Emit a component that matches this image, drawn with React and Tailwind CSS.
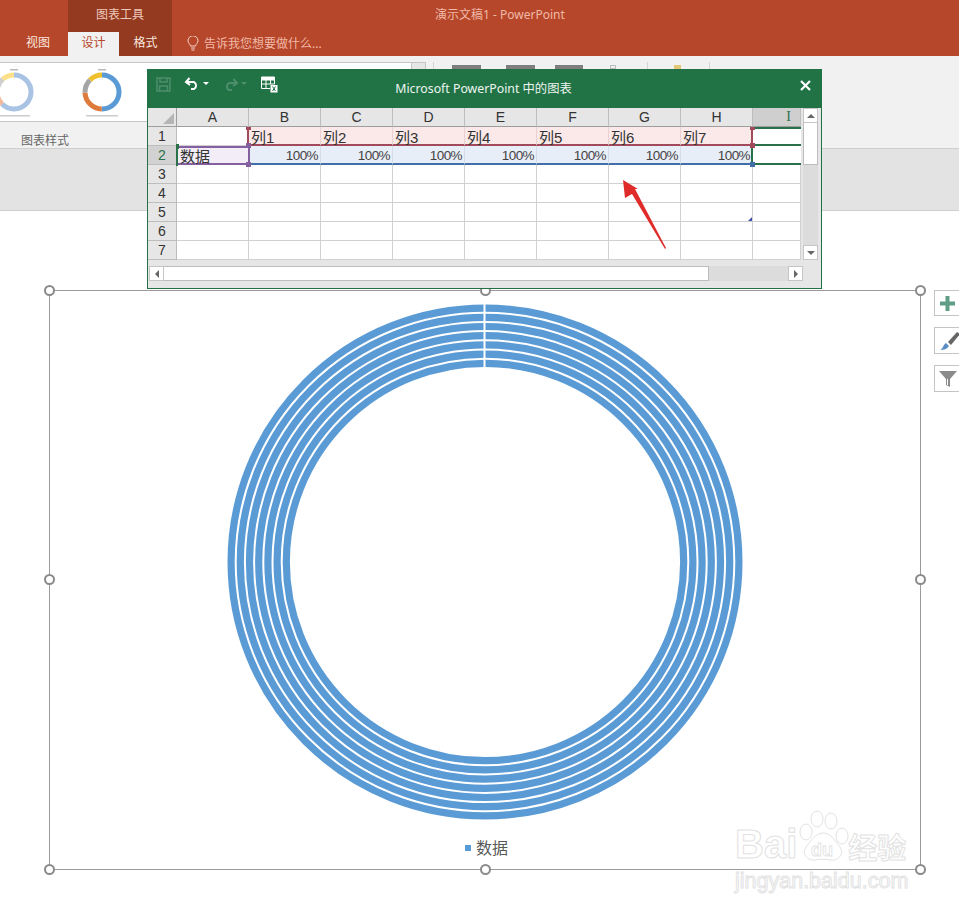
import React from "react";

const cjk = { fontFamily: '"Noto Sans", "Noto Sans CJK SC", sans-serif' };
const cell = { fontFamily: '"Liberation Sans", "Noto Sans CJK SC", sans-serif' };

const columns = ["A", "B", "C", "D", "E", "F", "G", "H", "I"];
const seriesNames = ["列1", "列2", "列3", "列4", "列5", "列6", "列7"];
const rings = [0, 1, 2, 3, 4, 5, 6];

function Handle({ className }) {
  return (
    <span
      className={`absolute h-[11px] w-[11px] rounded-full border-2 border-[#8a8a8a] bg-white ${className}`}
    />
  );
}

function Thumb({ pale }) {
  const c = 2 * Math.PI * 17;
  const parts = pale
    ? [
        ["#a9c3e4", 0.62],
        ["#f4b99c", 0.14],
        ["#cfcfcf", 0.12],
        ["#ffe08a", 0.12],
      ]
    : [
        ["#5b9bd5", 0.5],
        ["#dd7a3c", 0.24],
        ["#a5a5a5", 0.13],
        ["#f0c02c", 0.13],
      ];
  let offset = 0;
  return (
    <svg className="mt-[4px]" width="44" height="52" viewBox="0 0 44 52">
      <g transform="rotate(-90 22 24)" fill="none" strokeWidth="5">
        {parts.map(([color, share]) => {
          const el = (
            <circle
              key={color}
              cx="22"
              cy="24"
              r="17"
              stroke={color}
              strokeDasharray={`${share * c} ${c}`}
              strokeDashoffset={-offset * c}
            />
          );
          offset += share;
          return el;
        })}
      </g>
      <rect x="18" y="1" width="8" height="1.5" fill="#bbb" />
      <rect x="6" y="47" width="32" height="1.5" fill="#ccc" />
    </svg>
  );
}

function TitleBar() {
  return (
    <div className="bg-[#b7472a] text-white" style={cjk}>
      <div className="flex h-8">
        <div className="w-[68px]" />
        <div className="flex w-[104px] items-center justify-center bg-[#933a20] pb-[2px] text-xs text-[#f0c8bb]">
          图表工具
        </div>
        <div className="pl-[263px] pt-[7px] text-xs leading-4 text-[#f0b9a8]">
          演示文稿1 - PowerPoint
        </div>
      </div>
      <div className="flex h-6 text-xs">
        <div className="w-[68px] pl-[26px] pt-[3px] text-[#fbe6df]">视图</div>
        <div className="w-[51px] bg-[#f1f1f1] pt-[3px] text-center text-[#b7472a]">设计</div>
        <div className="w-[53px] bg-[#933a20] pt-[3px] text-center text-[#fbe6df]">格式</div>
        <div className="flex items-center gap-[5px] pb-[1px] pl-[15px] text-xs text-[#f0b9a8]">
          <svg width="12" height="15" viewBox="0 0 12 15" fill="none" stroke="#f5d6cb" strokeWidth="1">
            <path d="M3.5 10C3.3 8 1 7.2 1 4.8a5 5 0 0 1 10 0C11 7.200 8.700 8 8.500 10Z" />
            <path d="M4 12h4M4.500 14h3" />
          </svg>
          告诉我您想要做什么...
        </div>
      </div>
    </div>
  );
}

function Ribbon() {
  return (
    <div className="h-[155px] border-b border-[#d0d0d0] bg-[#e3e3e3]" style={cjk}>
      <div className="h-[93px] border-b border-[#cfcfcf] bg-[#f1f1f1]">
        <div className="flex items-start pt-[6px]">
          <div className="flex h-[60px] w-[412px] items-center gap-[44px] overflow-hidden border border-l-0 border-[#c6c6c6] bg-white pl-0">
            <div className="ml-[-8px]">
              <Thumb pale />
            </div>
            <Thumb />
          </div>
          <div className="h-[60px] w-[14px] border-y border-r border-[#c6c6c6] bg-[#e6e6e6]" />
          <div className="ml-[7px] h-[62px] w-px bg-[#d4d4d4]" />
          <div className="ml-[18px] mt-[3px] h-[4px] w-[29px] bg-[#7e7e7e]" />
          <div className="ml-[25px] mt-[3px] h-[4px] w-[29px] bg-[#7e7e7e]" />
          <div className="ml-[20px] mt-[3px] h-[4px] w-[28px] bg-[#7e7e7e]" />
          <div className="ml-[27px] mt-[3px] h-[4px] w-[6px] border border-[#bdbdbd]" />
          <div className="ml-[31px] h-[56px] w-px bg-[#d4d4d4]" />
          <div className="ml-[26px] mt-[3px] h-[4px] w-[7px] bg-[#e3c878]" />
          <div className="ml-[28px] h-[56px] w-px bg-[#d4d4d4]" />
        </div>
        <div className="pl-[21px] pt-[7px] text-xs leading-5 text-[#666]">图表样式</div>
      </div>
    </div>
  );
}

function ColumnHeader({ name }) {
  const active = name === "I";
  return (
    <div
      className={`flex items-center justify-center border-b border-r border-b-[#9e9e9e] border-r-[#bdbdbd] text-sm ${
        active ? "bg-[#cfcfcf] pl-[24px] text-[#2b6f4a]" : "bg-[#e6e6e6] text-[#333]"
      }`}
      style={active ? { fontFamily: '"Liberation Serif", serif' } : undefined}
    >
      {name}
    </div>
  );
}

function ExcelGrid() {
  return (
    <div
      className="relative grid grid-cols-[29px_repeat(8,72px)_48px] grid-rows-[repeat(8,19px)] text-sm text-[#333]"
      style={cell}
    >
      <div className="flex items-end justify-end border-b border-r border-b-[#9e9e9e] border-r-[#9e9e9e] bg-[#e6e6e6] p-[2px]">
        <div className="h-0 w-0 border-b-[11px] border-l-[11px] border-b-[#b5b5b5] border-l-transparent" />
      </div>
      {columns.map((c) => (
        <ColumnHeader key={c} name={c} />
      ))}

      {/* row 1 */}
      <div className="flex items-center justify-center border-b border-r border-[#bdbdbd] bg-[#e6e6e6]">1</div>
      <div className="border-b border-r border-[#d0d0d0] bg-white" />
      {seriesNames.map((n) => (
        <div key={n} className="border-b-2 border-r border-b-[#a04a5c] border-r-[#e6d0d0] bg-[#fbe8e8] pl-[2px] text-[15px] leading-[21px]">
          {n}
        </div>
      ))}
      <div className="border-b-2 border-t-2 border-[#2a7048] bg-white" />

      {/* row 2 */}
      <div className="flex items-center justify-center border-b border-r border-[#bdbdbd] bg-[#d2d2d2] text-[#2b6f4a]">2</div>
      <div className="border-y-2 border-[#8560a0] bg-[#f2edf7] pl-[3px] text-[15px] leading-[17px]">数据</div>
      {seriesNames.map((n) => (
        <div key={n} className="border-b-2 border-r border-b-[#3f6ea8] border-r-[#d5dde8] bg-[#e8eef8] pr-[2px] text-right text-[13.5px] leading-[19px] tracking-[-0.6px] text-[#444]">
          100%
        </div>
      ))}
      <div className="border-b-2 border-[#2a7048] bg-white" />

      {/* rows 3-7 */}
      {[3, 4, 5, 6, 7].map((row) => (
        <React.Fragment key={row}>
          <div className="flex items-center justify-center border-b border-r border-[#bdbdbd] bg-[#e6e6e6]">{row}</div>
          {columns.map((c) => (
            <div key={c} className="border-b border-r border-[#d0d0d0] bg-white" />
          ))}
        </React.Fragment>
      ))}

      {/* range handles */}
      <span className="absolute left-[98px] top-[35px] h-[5px] w-[5px] bg-[#8560a0]" />
      <span className="absolute left-[98px] top-[54px] h-[5px] w-[5px] bg-[#8560a0]" />
      <span className="absolute left-[28px] top-[36px] h-[5px] w-[3px] bg-[#2a7048]" />
      <span className="absolute left-[28px] top-[40px] h-[18px] w-[2px] bg-[#2a7048]" />
      <span className="absolute left-[100px] top-[40px] h-[15px] w-[2px] bg-[#8560a0]" />
      <span className="absolute left-[98px] top-[19px] h-[3px] w-[5px] bg-[#a04a5c]" />
      <span className="absolute left-[99px] top-[22px] h-[13px] w-[2px] bg-[#a04a5c]" />
      <span className="absolute left-[602px] top-[19px] h-[3px] w-[5px] bg-[#a04a5c]" />
      <span className="absolute left-[603px] top-[22px] h-[13px] w-[2px] bg-[#a04a5c]" />
      <span className="absolute left-[602px] top-[35px] h-[5px] w-[5px] bg-[#a04a5c]" />
      <span className="absolute left-[603px] top-[40px] h-[15px] w-[2px] bg-[#2a7048]" />
      <span className="absolute left-[602px] top-[54px] h-[5px] w-[5px] bg-[#3f6ea8]" />
      <span className="absolute left-[600px] top-[109px] h-0 w-0 border-b-[4px] border-l-[4px] border-b-[#3f4fa8] border-l-transparent" />

      {/* annotation arrow */}
      <svg className="absolute left-[460px] top-[60px]" width="70" height="90" viewBox="0 0 70 90">
        <polygon points="15,12 17,30 24,26 57,81 58,80 27,21 30,21" fill="#e02b2b" />
      </svg>
    </div>
  );
}

function ExcelWindow() {
  return (
    <div className="absolute left-[147px] top-[69px] z-10 w-[675px] border border-[#217346] bg-[#e6e6e6]">
      <div className="relative flex h-[38px] items-start bg-[#217346] text-white">
        <svg className="ml-[8px] mt-[7px]" width="15" height="15" viewBox="0 0 15 15" fill="none" stroke="#4d8f6c" strokeWidth="1.500">
          <path d="M1 1h13v13H1zM4 1v4h7V1M3.500 14V9h8v5" />
        </svg>
        <svg className="ml-[13px] mt-[6px]" width="17" height="15" viewBox="0 0 17 15" fill="none" stroke="#fff" strokeWidth="2">
          <path d="M5.500 2 2 6l4 3M2 6h8a4 4 0 0 1 0 7H7" />
        </svg>
        <span className="ml-[2px] mt-[12px] h-0 w-0 border-x-[3px] border-t-[3px] border-x-transparent border-t-white" />
        <svg className="ml-[13px] mt-[7px]" width="17" height="15" viewBox="0 0 17 15" fill="none" stroke="#4d8f6c" strokeWidth="2">
          <path d="M11.500 2 15 6l-4 3M15 6H7a4 4 0 0 0 0 7h3" />
        </svg>
        <span className="ml-[2px] mt-[12px] h-0 w-0 border-x-[3px] border-t-[3px] border-x-transparent border-t-[#4d8f6c]" />
        <svg className="ml-[14px] mt-[6px]" width="17" height="17" viewBox="0 0 17 17" fill="none" stroke="#fff" strokeWidth="1">
          <path d="M.5 1h13v3H.5z" fill="#fff" />
          <path d="M.5 4v8.500H9M.5 8h13M5 4v8.500M9.500 4v4M13.500 4v4" />
          <rect x="9.500" y="9" width="7" height="7.500" fill="#fff" stroke="none" />
          <path d="m11.500 10.500 3 4.500m0-4.500-3 4.500" stroke="#217346" />
        </svg>
        <div className="absolute inset-x-0 top-[9px] pr-[2px] text-center text-[12.3px] leading-5 text-[#eef5f0]" style={cjk}>
          Microsoft PowerPoint 中的图表
        </div>
        <svg className="absolute right-[10px] top-[10px]" width="11" height="11" viewBox="0 0 11 11" stroke="#fff" strokeWidth="2.200">
          <path d="m1 1 9 9m0-9-9 9" />
        </svg>
      </div>

      <div className="flex">
        <ExcelGrid />
        <div className="ml-[2px] flex h-[152px] w-[15px] flex-col bg-[#dcdcdc]">
          <div className="flex h-[15px] items-center justify-center border border-[#c6c6c6] bg-white">
            <span className="h-0 w-0 border-x-[4px] border-b-[4px] border-x-transparent border-b-[#666]" />
          </div>
          <div className="h-[42px] border border-t-0 border-[#bdbdbd] bg-white" />
          <div className="flex-1" />
          <div className="flex h-[15px] items-center justify-center border border-[#c6c6c6] bg-white">
            <span className="h-0 w-0 border-x-[4px] border-t-[4px] border-x-transparent border-t-[#666]" />
          </div>
        </div>
      </div>

      <div className="mb-[7px] ml-px mt-[6px] flex h-[15px] w-[654px] bg-[#dcdcdc]">
        <div className="flex w-[15px] items-center justify-center border border-[#c6c6c6] bg-white">
          <span className="h-0 w-0 border-y-[4px] border-r-[4px] border-y-transparent border-r-[#666]" />
        </div>
        <div className="w-[545px] border border-l-0 border-[#bdbdbd] bg-white" />
        <div className="flex-1" />
        <div className="flex w-[15px] items-center justify-center border border-[#c6c6c6] bg-white">
          <span className="h-0 w-0 border-y-[4px] border-l-[4px] border-y-transparent border-l-[#666]" />
        </div>
      </div>
    </div>
  );
}

function Donut() {
  return (
    <svg width="516" height="516" viewBox="0 0 516 516">
      {rings.map((i) => (
        <circle
          key={i}
          cx="258"
          cy="258"
          r={253.9 - 9.2 * i}
          fill="none"
          stroke="#5b9bd5"
          strokeWidth="7.200"
        />
      ))}
      <rect x="256.500" y="0" width="2" height="65" fill="#fff" />
    </svg>
  );
}

function SideButtons() {
  return (
    <div className="absolute left-[884px] top-[-1px] flex w-[40px] flex-col gap-[11px]">
      <div className="flex h-[26px] items-center border border-[#c4c4c4] bg-white pl-[5px]">
        <svg width="15" height="15" viewBox="0 0 15 15" fill="#5f9e85">
          <path d="M5.500 0h4v5.500H15v4H9.500V15h-4V9.500H0v-4h5.500z" />
        </svg>
      </div>
      <div className="flex h-[27px] items-center border border-[#c4c4c4] bg-white pl-[4px]">
        <svg width="22" height="22" viewBox="0 0 22 22">
          <path d="M1 20c3-1 3-5 6-7l3 3c-2 3-5 4-9 4Z" fill="#5b8ec4" />
          <path d="m9 12 9-10 3 2-9 11Z" fill="#666" />
        </svg>
      </div>
      <div className="flex h-[27px] items-center border border-[#c4c4c4] bg-white pl-[4px]">
        <svg width="18" height="18" viewBox="0 0 18 18">
          <path d="M0 1h18l-7 8v8l-4-2V9Z" fill="#8a8a8a" />
          <path d="M8.500 9v6" stroke="#fff" />
        </svg>
      </div>
    </div>
  );
}

function ChartFrame() {
  return (
    <div className="relative ml-[49px] mt-[79px] h-[580px] w-[872px] border border-[#9b9b9b]" style={cjk}>
      <div className="flex flex-col items-center pt-[13px]">
        <Donut />
        <div className="mt-[16px] flex items-center gap-[5px] pl-[3px] text-base leading-6 text-[#595959]">
          <span className="h-[6px] w-[6px] bg-[#5b9bd5]" />
          数据
        </div>
      </div>
      <Handle className="left-[-6px] top-[-6px]" />
      <Handle className="left-[430px] top-[-6px]" />
      <Handle className="left-[865px] top-[-6px]" />
      <Handle className="left-[-6px] top-[283px]" />
      <Handle className="left-[865px] top-[283px]" />
      <Handle className="left-[-6px] top-[573px]" />
      <Handle className="left-[430px] top-[573px]" />
      <Handle className="left-[865px] top-[573px]" />
      <SideButtons />
    </div>
  );
}

function Watermark() {
  const outline = "text-white [-webkit-text-stroke:1px_#e2e2e2]";
  return (
    <div className="absolute left-[735px] top-[808px] w-[175px]" style={cell}>
      <div className="flex h-[60px] items-end">
        <span className={`text-[40px] font-bold leading-[48px] ${outline}`}>Bai</span>
        <svg className="mb-[4px] ml-[1px]" width="52" height="54" viewBox="0 0 52 54" fill="#fff" stroke="#e2e2e2">
          <ellipse cx="19" cy="9" rx="6" ry="8" />
          <ellipse cx="33" cy="11" rx="6" ry="8" />
          <ellipse cx="8" cy="22" rx="6" ry="8" />
          <ellipse cx="44" cy="26" rx="6" ry="8" />
          <path d="M25 23c8 0 12 8 17 14 5 8-3 14-9 13-5-1-11-1-16 0-7 1-14-6-9-13 5-6 9-14 17-14Z" />
          <text x="13" y="46" fontSize="18" fontWeight="700" fill="#fff" stroke="#e2e2e2" strokeWidth="0.800">du</text>
        </svg>
        <span className={`ml-[-2px] text-[29px] font-bold leading-[40px] ${outline}`} style={cjk}>经验</span>
      </div>
      <div className={`text-[21.500px] leading-[26px] ${outline}`}>jingyan.baidu.com</div>
    </div>
  );
}

export default function App() {
  return (
    <div className="relative h-[912px] w-[959px] overflow-hidden bg-white">
      <TitleBar />
      <Ribbon />
      <ChartFrame />
      <ExcelWindow />
      <Watermark />
    </div>
  );
}
